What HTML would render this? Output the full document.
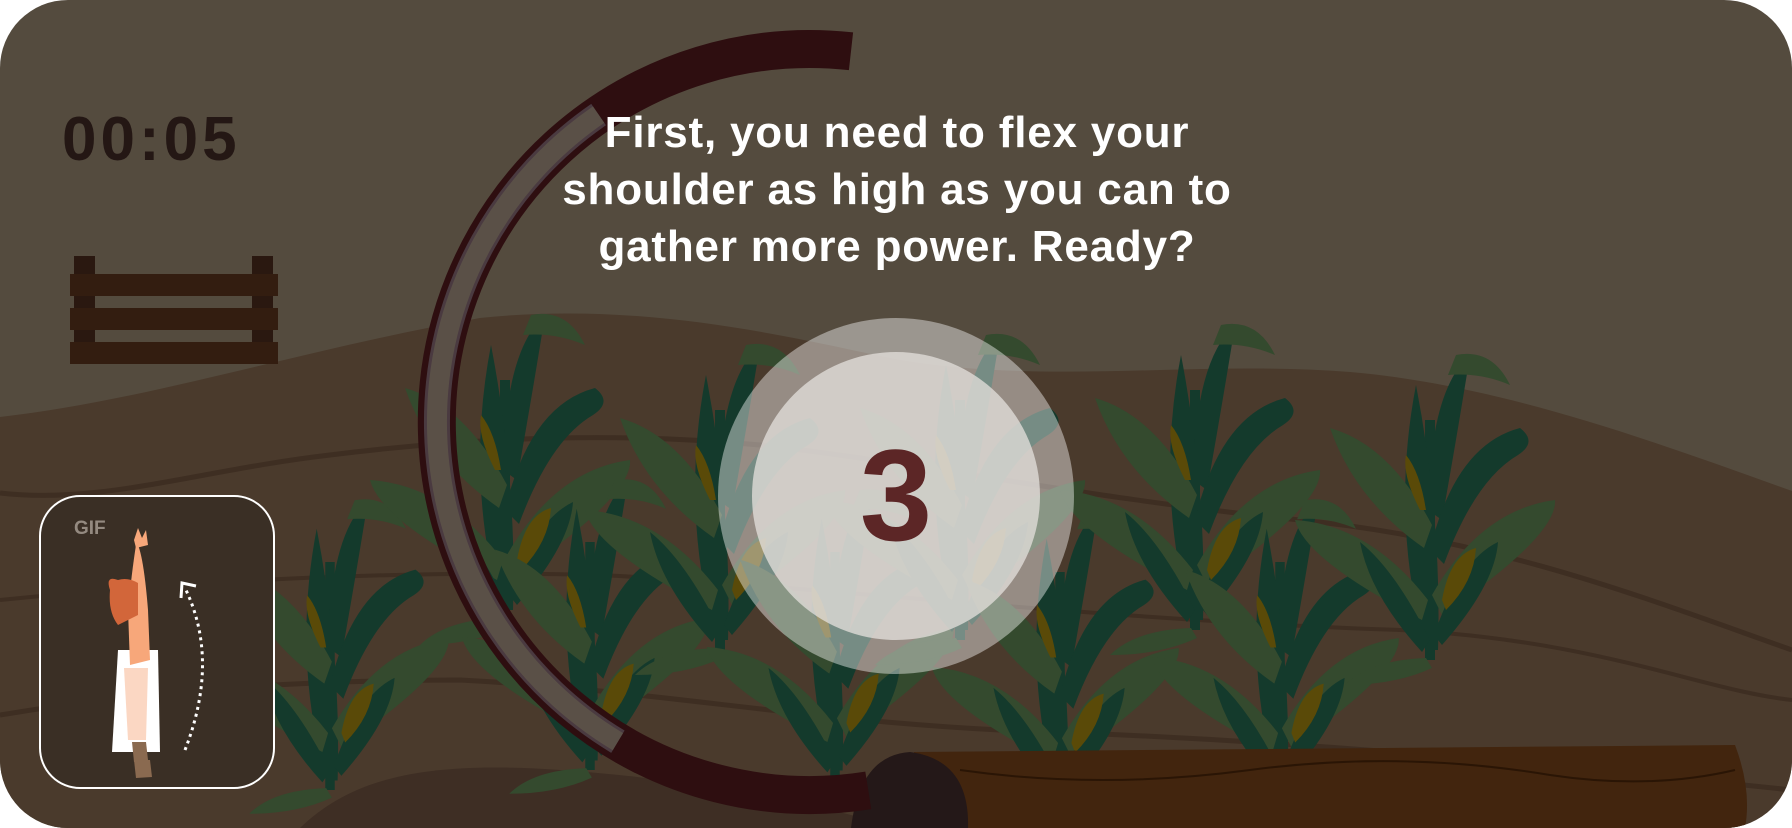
<!DOCTYPE html>
<html><head><meta charset="utf-8">
<style>
html,body{margin:0;padding:0;background:#fff;}
body{width:1792px;height:828px;overflow:hidden;position:relative;font-family:"Liberation Sans",sans-serif;}
#card{position:absolute;left:0;top:0;width:1792px;height:828px;border-radius:68px;overflow:hidden;background:#544b3e;}
svg{position:absolute;left:0;top:0;}
.t{position:absolute;color:#fff;font-weight:bold;}
</style></head><body>
<div id="card">
<svg width="1792" height="828" viewBox="0 0 1792 828">
<defs>
<g id="plant">
  <path d="M-5,0 L-5,-240 L5,-240 L5,0Z" fill="#143a2c"/>
  <path d="M-4,-10 Q-40,-140 -14,-275 Q12,-140 8,-10Z" fill="#143a2c"/>
  <path d="M-2,-150 Q0,-270 40,-305 Q28,-230 12,-140Z" fill="#143a2c"/>
  <path d="M26,-305 Q62,-312 80,-275 Q50,-288 18,-285Z" fill="#344a2e"/>
  <path d="M0,-110 Q25,-215 90,-232 Q108,-218 88,-205 Q45,-180 14,-96Z" fill="#143a2c"/>
  <path d="M2,-135 Q-40,-215 -100,-232 Q-75,-160 -6,-112Z" fill="#344a2e"/>
  <path d="M-2,-60 Q-60,-135 -135,-140 Q-125,-100 -8,-40Z" fill="#344a2e"/>
  <path d="M2,-65 Q50,-150 125,-160 Q128,-125 12,-45Z" fill="#344a2e"/>
  <path d="M0,-20 Q-35,-90 -70,-118 Q-60,-65 -8,-8Z" fill="#143a2c"/>
  <path d="M4,-25 Q30,-100 68,-118 Q65,-75 12,-15Z" fill="#143a2c"/>
  <path d="M12,-60 Q20,-105 46,-112 Q44,-78 16,-50Z" fill="#5a4a08"/>
  <path d="M-10,-150 Q-28,-185 -24,-205 Q-10,-188 -4,-150Z" fill="#5a4a08"/>
  <path d="M-4,-2 Q-60,0 -85,25 Q-35,25 2,8Z" fill="#344a2e"/>
</g>
</defs>
<path d="M0,417 C150,400 300,350 480,318 C650,300 800,340 900,360 C1050,385 1200,360 1350,372 C1500,385 1650,440 1792,491 L1792,828 L0,828Z" fill="#4a3a2c"/>
<path d="M0,493 C100,505 200,470 330,455 C450,440 600,430 760,445 C900,460 1100,500 1300,520 C1500,540 1650,600 1792,650" stroke="#3e2e22" stroke-width="5" fill="none"/>
<path d="M0,715 C150,690 300,680 460,680 C650,690 800,720 1000,730 C1300,740 1500,760 1792,790" stroke="#3e2e22" stroke-width="5" fill="none"/>
<path d="M0,600 C200,580 400,570 600,575 C800,585 1100,620 1400,630 C1600,640 1700,690 1792,700" stroke="#3e2e22" stroke-width="4" fill="none"/>
<path d="M300,828 C350,780 420,760 560,770 C700,780 800,800 900,828Z" fill="#3e2e24"/>
<use href="#plant" transform="translate(330,790) scale(0.95)"/>
<use href="#plant" transform="translate(505,620) scale(1)"/>
<use href="#plant" transform="translate(590,770) scale(0.95)"/>
<use href="#plant" transform="translate(720,650) scale(1)"/>
<use href="#plant" transform="translate(835,780) scale(0.95)"/>
<use href="#plant" transform="translate(960,640) scale(1)"/>
<use href="#plant" transform="translate(1060,800) scale(0.95)"/>
<use href="#plant" transform="translate(1195,630) scale(1)"/>
<use href="#plant" transform="translate(1280,790) scale(0.95)"/>
<use href="#plant" transform="translate(1430,660) scale(1)"/>
<path d="M914,752 L1735,745 Q1752,790 1745,828 L914,828Z" fill="#42250e"/>
<path d="M960,770 Q1100,790 1250,770 Q1400,750 1550,775 Q1650,790 1735,770" stroke="#2a1505" stroke-width="2" fill="none"/>
<path d="M851,828 Q860,755 910,752 Q970,760 968,828Z" fill="#241818"/>
<rect x="74" y="256" width="21" height="87" fill="#2a1810"/>
<rect x="252" y="256" width="21" height="87" fill="#2a1810"/>
<rect x="70" y="274" width="208" height="22" fill="#331d10"/>
<rect x="70" y="308" width="208" height="22" fill="#331d10"/>
<rect x="70" y="342" width="208" height="22" fill="#331d10"/>
<path d="M851,51.3 A373,373 0 1 0 868.3,790.4" fill="none" stroke="#2e0e10" stroke-width="38"/>
<path d="M598.6,114.6 A373,373 0 0 0 617.9,741.7" fill="none" stroke="#4a3a40" stroke-width="26"/>
<path d="M598.6,114.6 A373,373 0 0 0 617.9,741.7" fill="none" stroke="#5a5047" stroke-width="20"/>
<circle cx="896" cy="496" r="178" fill="rgba(255,255,255,0.42)"/>
<circle cx="896" cy="496" r="144" fill="rgba(225,222,218,0.78)"/>
<rect x="40" y="496" width="234" height="292" rx="40" fill="#3a2f25" stroke="#fff" stroke-width="2"/>
<path d="M118,650 L158,650 L160,752 L112,752Z" fill="#fff"/>
<path d="M138,545 Q144,560 148,610 L150,660 L130,665 L128,610 Q132,570 136,545Z" fill="#f7a77a"/>
<path d="M124,668 L148,668 L146,740 L128,740Z" fill="rgba(247,167,122,0.45)"/>
<path d="M132,742 L146,742 L148,760 L134,762Z" fill="#8a6a50"/>
<path d="M134,760 L150,760 L152,777 L136,778Z" fill="#8a6a50"/>
<path d="M134,540 L138,528 L142,538 L146,530 L148,545 L136,548Z" fill="#f7a77a"/>
<path d="M110,590 Q105,575 118,580 Q128,577 138,583 L138,615 L118,625 Q108,612 110,590Z" fill="#d2663a"/>
<path d="M185,750 Q220,660 185,588" fill="none" stroke="#fff" stroke-width="3" stroke-dasharray="3 4"/>
<path d="M181,598 L182,583 L196,586" fill="none" stroke="#fff" stroke-width="3"/>
</svg>
<div class="t" style="left:74px;top:518px;font-size:19px;color:#948a80;">GIF</div>
<div class="t" style="left:62px;top:104px;font-size:62px;color:#241714;letter-spacing:4px;">00:05</div>
<div class="t" style="left:447px;top:104px;width:900px;text-align:center;font-size:44px;line-height:57px;letter-spacing:0.8px;">First, you need to flex your<br>shoulder as high as you can to<br>gather more power. Ready?</div>
<div class="t" style="left:796px;top:420px;width:200px;text-align:center;font-size:130px;line-height:150px;color:#5c2626;">3</div>
</div>
</body></html>
